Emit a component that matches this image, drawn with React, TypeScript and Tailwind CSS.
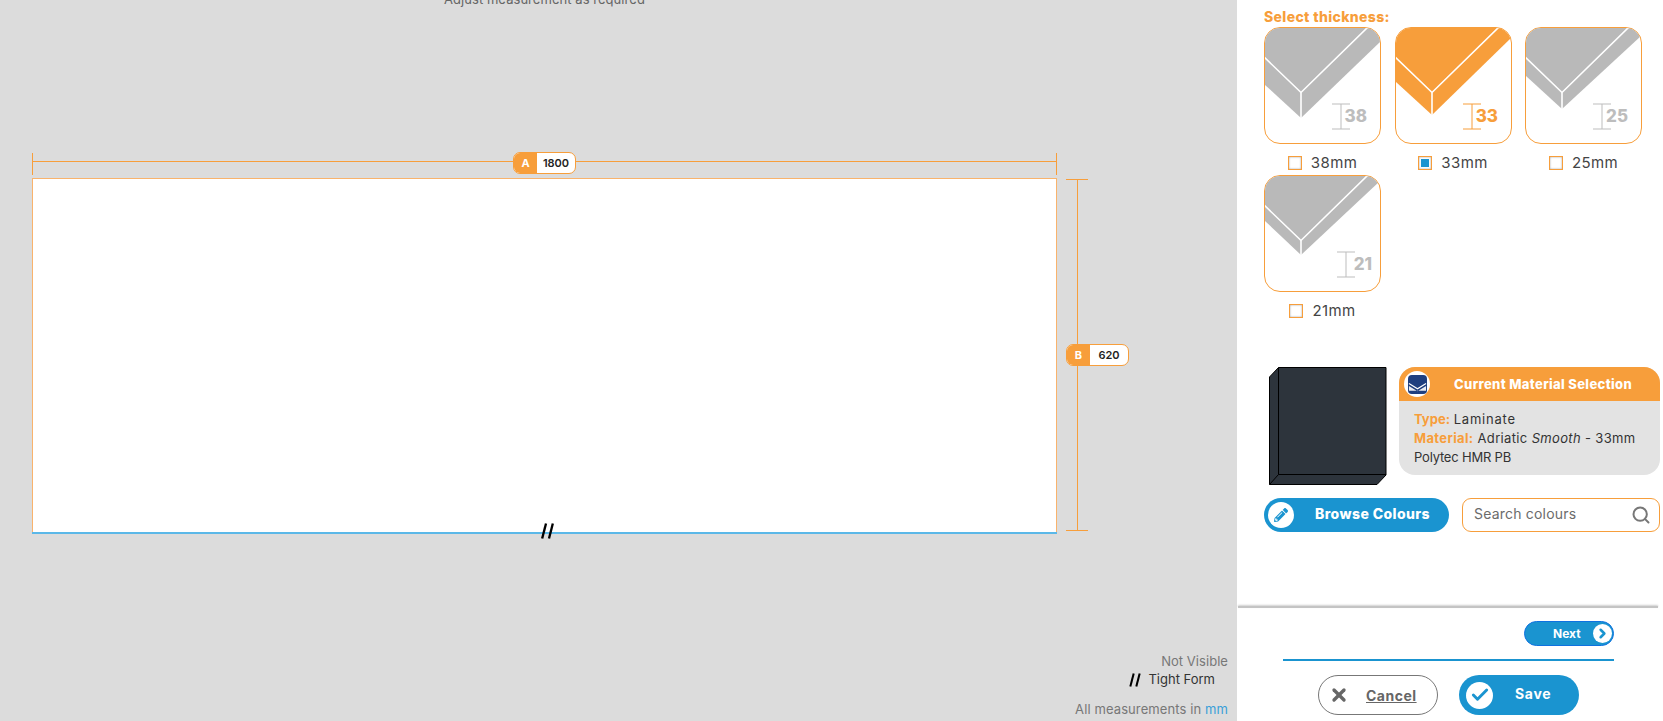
import React from "react";
import { Check, ChevronRight, Search, X } from "lucide-react";
import { FaPencilAlt } from "react-icons/fa";

const ORANGE = "#f79e3b";
const GREY = "#b9b9b9";

type Opt = { v: string; lower: number; vy: number; ry: number; selected?: boolean; tick: number };
const options: Opt[] = [
  { v: "38", lower: 57, vy: 91, ry: 14, tick: 68 },
  { v: "33", lower: 54, vy: 88, ry: 10, selected: true, tick: 68 },
  { v: "25", lower: 48, vy: 82, ry: 8, tick: 68 },
  { v: "21", lower: 45, vy: 80, ry: 5, tick: 73 },
];

function Corner({ o }: { o: Opt }) {
  const c = o.selected ? ORANGE : GREY;
  const t = o.selected ? ORANGE : "#bdbdbd";
  return (
    <svg viewBox="1 1 115 115" className="w-full h-full block">
      <polygon points={`0,0 117,0 117,${o.ry} 37,${o.vy} 0,${o.lower}`} fill={c} />
      <polyline points="0,30 37,65.5 104,0" fill="none" stroke="#fff" strokeWidth="1.6" />
      <line x1="37" y1="65.5" x2="37" y2={o.vy + 1} stroke="#fff" strokeWidth="1.6" />
      <g stroke={t} strokeWidth="1">
        <line x1={o.tick} y1="77" x2={o.tick + 18} y2="77" />
        <line x1={o.tick} y1="102" x2={o.tick + 18} y2="102" />
        <line x1={o.tick + 9} y1="77" x2={o.tick + 9} y2="102" />
      </g>
      <text
        x={o.tick + 35}
        y="95"
        textAnchor="end"
        fill={t}
        fontSize="17"
        fontWeight="800"
        fontFamily="Inter, sans-serif"
      >
        {o.v}
      </text>
    </svg>
  );
}

function ThicknessOption({ o }: { o: Opt }) {
  return (
    <div className="flex flex-col w-[117px] h-[148px]">
      <div className="w-[117px] h-[117px] rounded-[16px] border border-[#f79e3b] overflow-hidden bg-white">
        <Corner o={o} />
      </div>
      <div className="flex justify-center items-center gap-[9px] mt-[12px] h-[14px]">
        <span className="w-[14px] h-[14px] border border-[#f79e3b] bg-white shadow-[inset_0_0_2px_#999] flex items-center justify-center">
          {o.selected && <span className="w-[8px] h-[8px] bg-[#1a94d0]" />}
        </span>
        <span className="text-[15px] leading-[14px] text-[#444] tracking-[0.4px]">{o.v}mm</span>
      </div>
    </div>
  );
}

function Swatch() {
  return (
    <svg width="119" height="119" viewBox="0 0 119 119" className="block shrink-0 ml-[4px]">
      <polygon points="1.5,11 10.5,1.5 118,1.5 118,109 109,118.5 1.5,118.5" fill="#2d343c" stroke="#000" strokeWidth="1" />
      <polyline points="1.5,118.5 10.5,108.5 118,108.5" fill="none" stroke="#000" strokeWidth="1" />
      <line x1="10.5" y1="1.5" x2="10.5" y2="108.5" stroke="#000" strokeWidth="1" />
    </svg>
  );
}

function Envelope() {
  return (
    <span className="w-[26px] h-[26px] rounded-full bg-white flex items-center justify-center shrink-0">
      <svg width="19" height="19" viewBox="0 0 20 20">
        <rect x="0" y="0" width="20" height="20" rx="4" fill="#1f3f7f" />
        <polyline points="1,9 10,14.5 19,9" fill="none" stroke="#fff" strokeWidth="1.3" />
        <polyline points="1,11.5 10,17 19,11.5 19,16.5 1,16.5 1,11.5" fill="#fff" fillOpacity="0.9" stroke="none" />
      </svg>
    </span>
  );
}

function Slashes({ className }: { className: string }) {
  return (
    <svg viewBox="0 0 12 15" className={className}>
      <line x1="4.6" y1="0.5" x2="1" y2="14.5" stroke="#000" strokeWidth="2.2" />
      <line x1="11" y1="0.5" x2="7.4" y2="14.5" stroke="#000" strokeWidth="2.2" />
    </svg>
  );
}

function DimBadge({ letter, value, className }: { letter: string; value: string; className: string }) {
  return (
    <div className={`absolute flex w-[63px] h-[22px] rounded-[7px] border border-[#f79e3b] bg-white overflow-hidden ${className}`}>
      <span className="w-[23px] bg-[#f79e3b] text-white text-[11px] font-bold flex items-center justify-center">{letter}</span>
      <span className="flex-1 text-[#222] text-[11px] font-semibold flex items-center justify-center">{value}</span>
    </div>
  );
}

export default function App() {
  return (
    <div className="flex w-full h-[721px] overflow-hidden font-['Inter',sans-serif] bg-white">
      {/* Canvas */}
      <div className="w-[1237px] h-full bg-[#dcdcdc] flex flex-col shrink-0">
        <div className="ml-[32px] w-[1025px] text-center text-[13px] leading-[18px] -mt-[10px] text-[#666] tracking-[0.05px]">
          Adjust measurement as required
        </div>
        <div className="relative ml-[32px] mt-[170px] w-[1025px] h-[354px] bg-white border border-[#f9b36c] border-b-0">
          <div className="absolute left-[-1px] right-[-1px] bottom-[-2px] h-[2px] bg-[#5bb8e8]" />
          {/* dimension A */}
          <div className="absolute left-[-1px] top-[-26px] w-px h-[22px] bg-[#f79e3b]" />
          <div className="absolute right-[-1px] top-[-26px] w-px h-[22px] bg-[#f79e3b]" />
          <div className="absolute left-[-1px] right-[-1px] top-[-18px] h-px bg-[#f79e3b]" />
          <DimBadge letter="A" value="1800" className="left-[480px] top-[-27px]" />
          {/* dimension B */}
          <div className="absolute left-[1033px] w-[22px] top-0 h-px bg-[#f79e3b]" />
          <div className="absolute left-[1033px] w-[22px] top-[351px] h-px bg-[#f79e3b]" />
          <div className="absolute left-[1044px] w-px top-0 h-[351px] bg-[#f79e3b]" />
          <DimBadge letter="B" value="620" className="left-[1033px] top-[165px]" />
          <Slashes className="absolute left-[508px] top-[344px] w-[13px] h-[16px]" />
        </div>

        <div className="mt-auto pr-[9px] pb-[3px] flex flex-col items-end">
          <div className="text-[13px] leading-[20px] text-[#777] tracking-[0.05px]">Not Visible</div>
          <div className="flex items-center gap-[7px] pr-[13px] h-[18px] text-[13px] text-[#333]">
            <Slashes className="w-[12px] h-[14px]" />
            <span>Tight Form</span>
          </div>
          <div className="mt-[11px] text-[13px] leading-[18px] text-[#777] tracking-[0.1px]">
            All measurements in <span className="text-[#3a9fd8]">mm</span>
          </div>
        </div>
      </div>

      {/* Side panel */}
      <div className="flex-1 flex flex-col h-full bg-white">
        <div className="pl-[27px] pr-[3px]">
          <div className="pt-[7px] h-[27px] text-[14px] leading-[20px] font-extrabold text-[#f79e3b] tracking-[0.35px]">Select thickness:</div>
          <div className="grid grid-cols-[117px_117px_117px] gap-x-[13.5px]">
            {options.map((o) => (
              <ThicknessOption key={o.v} o={o} />
            ))}
          </div>

          <div className="flex mt-[43px]">
            <Swatch />
            <div className="ml-[12px] mt-px w-[261px] h-[108px] rounded-[16px] overflow-hidden bg-[#e3e3e3]">
              <div className="h-[34px] bg-[#f79e3b] flex items-center pl-[5px]">
                <Envelope />
                <span className="ml-[24px] mt-[1px] text-[13px] font-extrabold text-white tracking-[0.35px]">Current Material Selection</span>
              </div>
              <div className="pl-[15px] pt-[9px] text-[13px] leading-[19px] text-[#333]">
                <div>
                  <b className="font-bold text-[#f79e3b]">Type:</b> <span className="tracking-[0.8px]">Laminate</span>
                </div>
                <div className="tracking-[0.35px]">
                  <b className="font-bold text-[#f79e3b]">Material:</b> Adriatic <i>Smooth</i> - 33mm
                </div>
                <div className="tracking-[-0.2px]">Polytec HMR PB</div>
              </div>
            </div>
          </div>

          <div className="flex mt-[13px] gap-[13px]">
            <button className="w-[185px] h-[34px] rounded-full bg-[#1a94d0] flex items-center pl-[4px]">
              <span className="w-[26px] h-[26px] rounded-full bg-white flex items-center justify-center text-[#1a94d0]">
                <FaPencilAlt size={14} />
              </span>
              <span className="ml-[21px] mb-[3px] text-[14px] font-extrabold text-white tracking-[0.4px]">Browse Colours</span>
            </button>
            <div className="w-[198px] h-[34px] rounded-[9px] border border-[#f79e3b] flex items-center pl-[11px] pr-[8px]">
              <input
                placeholder="Search colours"
                className="flex-1 min-w-0 mb-[3px] text-[14px] tracking-[0.2px] text-[#666] placeholder:text-[#6b6b6b] outline-none bg-transparent"
              />
              <Search size={20} color="#777" strokeWidth={2.4} />
            </div>
          </div>
        </div>

        {/* Footer */}
        <div className="mt-auto">
          <div className="ml-[1px] mr-[5px] h-[2px] bg-[#c4c4c4] shadow-[0_-1px_2px_rgba(0,0,0,0.2)]" />
          <div className="flex justify-end pr-[49px] pt-[13px]">
            <button className="w-[90px] h-[25px] rounded-full bg-[#1a94d0] border border-[#0f72e0] flex items-center pl-[28px] pr-[1px]">
              <span className="text-[12px] font-bold text-white">Next</span>
              <span className="ml-auto w-[19px] h-[19px] rounded-full bg-white flex items-center justify-center">
                <ChevronRight size={15} strokeWidth={4} color="#1a94d0" />
              </span>
            </button>
          </div>
          <div className="ml-[46px] mr-[49px] mt-[13px] h-[2px] bg-[#1a94d0]" />
          <div className="flex ml-[81px] mt-[14px] mb-[6px] gap-[21px]">
            <button className="w-[120px] h-[40px] rounded-full border border-[#777] flex items-center pl-[10px]">
              <X size={20} strokeWidth={4} color="#666" />
              <span className="ml-[17px] text-[14px] font-bold text-[#666] underline tracking-[0.5px]">Cancel</span>
            </button>
            <button className="w-[120px] h-[40px] rounded-full bg-[#1a94d0] flex items-center pl-[7px]">
              <span className="w-[27px] h-[27px] rounded-full bg-white flex items-center justify-center">
                <Check size={20} strokeWidth={3.5} color="#1a94d0" />
              </span>
              <span className="ml-[22px] mb-[3px] text-[14px] font-bold text-white tracking-[0.7px]">Save</span>
            </button>
          </div>
        </div>
      </div>
    </div>
  );
}
